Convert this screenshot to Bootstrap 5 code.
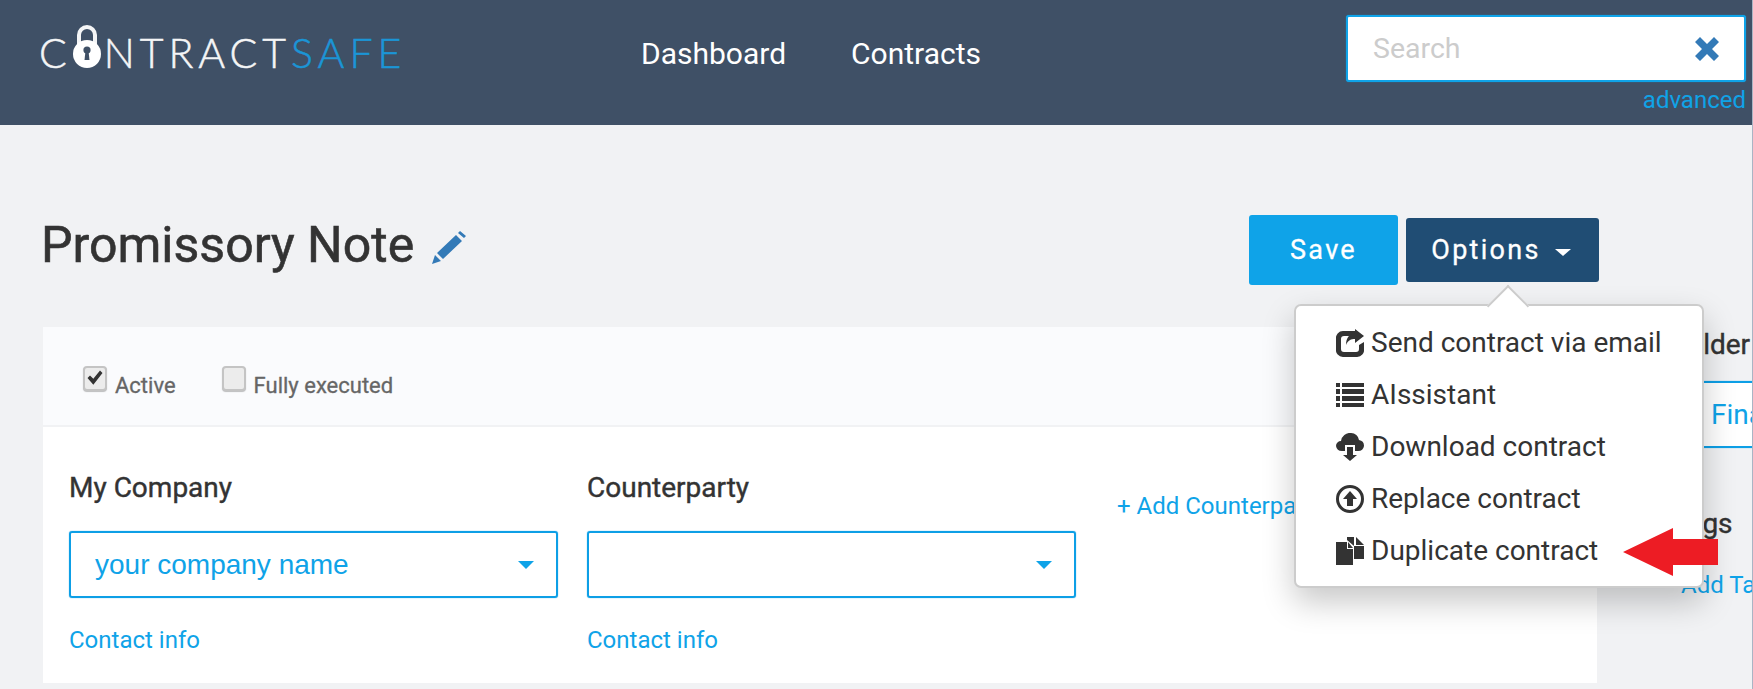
<!DOCTYPE html>
<html lang="en">
<head>
    <meta charset="UTF-8">
    <meta name="viewport" content="width=device-width, initial-scale=1.0">
    <title>ContractSafe - Promissory Note</title>
    <link rel="stylesheet" href="https://cdn.jsdelivr.net/npm/bootstrap@5.3.0/dist/css/bootstrap.min.css">
    <style>
        html, body { height: 100%; overflow: hidden; }
        body {
            background-color: #f1f2f4;
            font-family: Roboto, "Liberation Sans", sans-serif;
            color: #333;
            border-right: 1px solid #aab4c4;
        }
        a { text-decoration: none; color: #0fa3e8; }

        .top-bar { height: 125px; background-color: #3f5066; }
        .cs-logo {
            width: 360px;
            height: 44px;
            margin-left: 39px;
            margin-top: 24px;
            font-family: Lato, sans-serif;
            font-weight: 300;
            font-size: 41px;
            line-height: 30px;
            letter-spacing: 5px;
            color: #f4f5f6;
            -webkit-text-stroke: .5px currentColor;
            white-space: nowrap;
        }
        .cs-logo svg { margin: 0 3px 0 1px; flex-shrink: 0; }
        .cs-logo span { color: #1b95d6; }
        .top-links { margin-left: 242px; margin-top: 34px; gap: 65px; }
        .top-links a { color: #fff; font-size: 30px; line-height: 40px; }
        .search-wrap { width: 400px; margin-left: auto; margin-right: 6px; margin-top: 15px; }
        .search-box {
            height: 67px;
            background: #fff;
            border: 2px solid #0fa3e8;
            box-shadow: 0 0 1px #0fa3e8;
            border-radius: 3px;
            padding: 2px 25px 0 25px;
        }
        .search-box svg { margin-top: -2px; }
        .search-box input {
            border: 0; outline: 0; flex: 1; min-width: 0; padding: 0;
            font-size: 28.5px; color: #333; background: transparent;
        }
        .search-box input::placeholder { color: #ccc; opacity: 1; }
        .adv-link { font-size: 24px; line-height: 28px; margin-top: 4px; }

        .page-main { padding: 90px 0 0 43px; }
        .title-row { width: 1556px; height: 70px; margin-bottom: 42px; }
        .page-title {
            font-size: 50px; font-weight: 400; line-height: 56px; margin: -11px 0 0 -2px;
            -webkit-text-stroke: .6px currentColor;
        }
        .page-title svg { margin-left: 18px; vertical-align: -2px; }
        .btn-save, .btn-options {
            font-family: Roboto, sans-serif;
            font-size: 27px;
            font-weight: 400;
            letter-spacing: 2.3px;
            -webkit-text-stroke: .3px currentColor;
            color: #fff;
            border: 0;
            border-radius: 3px;
        }
        .btn-save { width: 149px; height: 70px; background-color: #0fa3e8; }
        .btn-options { width: 193px; height: 64px; background-color: #204d74; padding-right: 15px; }
        .btn-options:hover, .btn-options:active, .btn-save:hover { color: #fff; }
        .btn-options.show { background-color: #204d74 !important; color: #fff !important; }
        .btn-options.dropdown-toggle::after {
            margin-left: 14px;
            border-top-width: 7px; border-left-width: 8px; border-right-width: 8px;
            vertical-align: 3px;
        }

        .main-card { width: 1554px; height: 356px; background: #fff; flex-shrink: 0; }
        .card-top {
            height: 100px;
            background: #fafbfd;
            border-bottom: 2px solid #f1f2f4;
            padding: 41px 0 0 40px;
            gap: 46px;
        }
        .check-item {
            gap: 8px; font-size: 22px; font-weight: 400; color: #666; line-height: 36px; height: 36px;
            -webkit-text-stroke: .3px currentColor;
        }
        .check-item input {
            appearance: none;
            width: 24px; height: 25px;
            margin: 0 0 16px;
            background-color: #ececec;
            border: 2px solid #c4c4c4;
            border-radius: 4px;
            box-shadow: 0 1px 1px rgba(0,0,0,.25);
        }
        .check-item input:checked {
            background-image: url("data:image/svg+xml,%3Csvg xmlns='http://www.w3.org/2000/svg' viewBox='0 0 24 24'%3E%3Cpath d='M3 12l3-3 4 4 8-10 3 3-11 14z' fill='%23333'/%3E%3C/svg%3E");
            background-size: 20px 20px;
            background-position: center;
            background-repeat: no-repeat;
        }
        .card-fields { padding: 44px 0 0 26px; gap: 29px; }
        .party-col { width: 489px; }
        .field-title {
            font-size: 28px; font-weight: 400; line-height: 36px; margin: -1px 0 25px; color: #333;
            -webkit-text-stroke: .4px currentColor;
        }
        .pick-box {
            height: 67px;
            border: 2px solid #0d9fe6;
            box-shadow: 0 0 1px #0d9fe6;
            border-radius: 3px;
            padding: 0 24px;
            font-family: "Liberation Sans", sans-serif;
            font-size: 28px;
            color: #0fa3e8;
        }
        .pick-caret {
            width: 0; height: 0;
            margin-left: auto;
            margin-right: -2px;
            border-left: 8px solid transparent;
            border-right: 8px solid transparent;
            border-top: 8px solid #0fa3e8;
        }
        .info-link { display: block; margin-top: 27px; font-size: 24px; line-height: 30px; }
        .add-party { font-size: 24px; line-height: 30px; margin: 20px 0 0 12px; white-space: nowrap; }

        .side-col { width: 488px; flex-shrink: 0; margin-left: 75px; padding-top: 0; }
        .side-title {
            font-size: 28px; font-weight: 400; line-height: 36px; margin: 0; color: #333;
            -webkit-text-stroke: .4px currentColor;
        }
        .folder-box {
            height: 67px;
            margin-top: 18px;
            margin-bottom: 58px;
            background: #fff;
            border: 2px solid #0d9fe6;
            box-shadow: 0 0 1px #0d9fe6;
            border-radius: 3px;
            padding: 0 37px;
            font-size: 28px;
            color: #0fa3e8;
        }
        .side-col .add-tag { display: block; font-size: 24px; margin: 28px 0 0 9px; line-height: 30px; }

        .options-menu {
            position: absolute;
            left: 1294px;
            top: 304px;
            width: 410px;
            height: 284px;
            padding: 11px 0 0 40px;
            background: #fff;
            border: 2px solid #ccc;
            border-radius: 7px;
            box-shadow: 0 14px 32px rgba(0,0,0,.22);
        }
        .menu-beak {
            position: absolute;
            left: 197px;
            top: -15px;
            width: 30px;
            height: 30px;
            transform: rotate(45deg);
            background: #fff;
            border-left: 2px solid #ccc;
            border-top: 2px solid #ccc;
        }
        .menu-row {
            height: 52px;
            gap: 7px;
            font-size: 28px;
            color: #333;
            white-space: nowrap;
            position: relative;
        }
        .menu-row svg { width: 28px; height: 28px; flex-shrink: 0; fill: #333; }
        .red-arrow { position: absolute; left: 1623px; top: 528px; }
    </style>
</head>
<body>
    <header class="top-bar d-flex align-items-start">
        <a href="#" class="cs-logo d-flex align-items-end">C<svg width="28" height="44" viewBox="0 0 28 44"><path d="M6 22V11a8 8 0 0 1 16 0v11" fill="none" stroke="#f4f5f6" stroke-width="4"/><circle cx="14" cy="30" r="14" fill="#fff"/><circle cx="14" cy="26" r="3.6" fill="#3f5066"/><path d="M12.5 27h3l1 9h-5z" fill="#3f5066"/></svg>NTRACT<span>SAFE</span></a>
        <nav class="top-links d-flex">
            <a href="#">Dashboard</a>
            <a href="#">Contracts</a>
        </nav>
        <div class="search-wrap">
            <div class="search-box d-flex align-items-center">
                <input type="text" placeholder="Search">
                <svg width="24" height="24" viewBox="0 0 24 24"><path d="M5 0l7 7 7-7 5 5-7 7 7 7-5 5-7-7-7 7-5-5 7-7-7-7z" fill="#337ab7"/></svg>
            </div>
            <div class="adv-link text-end"><a href="#">advanced</a></div>
        </div>
    </header>

    <main class="page-main">
        <div class="title-row d-flex align-items-center">
            <h1 class="page-title me-auto">Promissory Note<svg width="35" height="33" viewBox="0 0 35 33"><path d="M0 33l3-9 6 6zM5 22L24 4l6 6-19 18zM26 2l2-2 6 5-2 2z" fill="#337ab7"/></svg></h1>
            <button type="button" class="btn btn-save">Save</button>
            <button type="button" class="btn btn-options dropdown-toggle ms-2">Options</button>
        </div>

        <div class="d-flex">
            <section class="main-card">
                <div class="card-top d-flex">
                    <label class="check-item d-flex align-items-center"><input type="checkbox" checked>Active</label>
                    <label class="check-item d-flex align-items-center"><input type="checkbox">Fully executed</label>
                </div>
                <div class="card-fields d-flex">
                    <div class="party-col">
                        <p class="field-title">My Company</p>
                        <div class="pick-box d-flex align-items-center">your company name<i class="pick-caret"></i></div>
                        <a href="#" class="info-link">Contact info</a>
                    </div>
                    <div class="party-col">
                        <p class="field-title">Counterparty</p>
                        <div class="pick-box d-flex align-items-center"><i class="pick-caret"></i></div>
                        <a href="#" class="info-link">Contact info</a>
                    </div>
                    <a href="#" class="add-party">+ Add Counterparty</a>
                </div>
            </section>

            <aside class="side-col">
                <p class="side-title">Folder</p>
                <div class="folder-box d-flex align-items-center">Finance</div>
                <p class="side-title">Tags</p>
                <a href="#" class="add-tag">Add Tag</a>
            </aside>
        </div>
    </main>

    <div class="options-menu">
        <i class="menu-beak"></i>
        <div class="menu-row d-flex align-items-center">
            <svg viewBox="0 0 28 28"><path d="M7 2h12v5H8a3 3 0 0 0-3 3v10a3 3 0 0 0 3 3h12a3 3 0 0 0 3-3v-4l5-3v7a7 7 0 0 1-7 8H7a7 7 0 0 1-7-8V10a7 7 0 0 1 7-8z"/><path d="M19 0l9 7-9 7v-4c-4 0-7 1-9 6 0-7 3-11 9-12z"/></svg>
            Send contract via email
        </div>
        <div class="menu-row d-flex align-items-center">
            <svg viewBox="0 0 28 28"><path d="M0 2h4v4H0zM6 2h22v4H6zM0 8h4v5H0zM6 8h22v5H6zM0 15h4v5H0zM6 15h22v5H6zM0 22h4v4H0zM6 22h22v4H6z"/></svg>
            AIssistant
        </div>
        <div class="menu-row d-flex align-items-center">
            <svg viewBox="0 0 28 28"><path d="M15 0a8 8 0 0 1 8 7 6 6 0 0 1 5 6 6 6 0 0 1-6 5h-3v-6H9v6H6a6 6 0 0 1-6-5 5 5 0 0 1 5-5 9 9 0 0 1 10-8z"/><path d="M11 14h6v8h4l-7 6-7-6h4z"/></svg>
            Download contract
        </div>
        <div class="menu-row d-flex align-items-center">
            <svg viewBox="0 0 28 28"><path fill-rule="evenodd" d="M14 0a14 14 0 1 1 0 28 14 14 0 0 1 0-28zm0 3a11 11 0 1 0 0 22 11 11 0 0 0 0-22z"/><path d="M14 6l7 8h-4v7h-6v-7H7z"/></svg>
            Replace contract
        </div>
        <div class="menu-row d-flex align-items-center">
            <svg viewBox="0 0 28 28"><path d="M0 5h11v7h6v16H0zM12 5l5 6h-5z"/><path d="M11 0h7v9h2v13h-2V9l-7-6zM20 0l8 8h-8zM20 9h8v13h-8z"/></svg>
            Duplicate contract
        </div>
    </div>

    <svg class="red-arrow" width="95" height="48" viewBox="0 0 95 48"><path d="M0 24L50 0v11h45v26H50v11z" fill="#ed1c24"/></svg>

    <script src="https://cdn.jsdelivr.net/npm/bootstrap@5.3.0/dist/js/bootstrap.bundle.min.js"></script>
</body>
</html>
